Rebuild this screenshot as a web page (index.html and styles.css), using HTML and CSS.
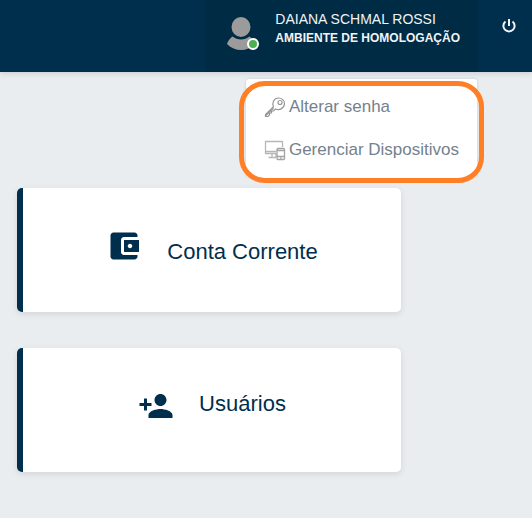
FILE: index.html
```html
<!DOCTYPE html>
<html lang="pt-BR">
<head>
<meta charset="utf-8">
<meta name="viewport" content="width=device-width, initial-scale=1">
<title>Início</title>
<link rel="stylesheet" href="styles.css">
</head>
<body>
<header class="topbar">
  <div class="user">
    <div class="avatar">
      <svg width="36" height="36" viewBox="0 0 36 36" aria-hidden="true">
        <ellipse cx="18" cy="11" rx="9.500" ry="10" fill="#9b9b9b"/>
        <path d="M4 28C5 25 7 22 9.500 20.500C14.500 24.500 21.500 24.500 26.500 20.500C29 22 31 25 32 28C24 36 12 36 4 28Z" fill="#9b9b9b"/>
      </svg>
      <span class="status"></span>
    </div>
    <div class="identity">
      <span class="name">DAIANA SCHMAL ROSSI</span>
      <span class="environment">AMBIENTE DE HOMOLOGAÇÃO</span>
    </div>
    <nav class="menu">
      <a class="menu-item" href="#">
        <svg width="22" height="22" viewBox="0 0 22 22" fill="none" stroke="#969696" stroke-width="1.200" aria-hidden="true">
          <path d="M9.500 11.500C7.500 7 10 2 14.500 2C18 2 20.500 4.500 20.500 7.500C20.500 12 15.500 14.800 11.500 13L9.500 15H7.500V17H5.500V19L4 20.500H1.500V18.500L9.500 10.800"/>
          <path d="M2 19.500L9.500 12.300"/>
          <circle cx="16" cy="6.500" r="2"/>
        </svg>
        Alterar senha
      </a>
      <a class="menu-item" href="#">
        <svg width="22" height="22" viewBox="0 0 22 22" fill="none" stroke="#b4b8ba" stroke-width="1.300" aria-hidden="true">
          <path d="M12 14.500H1.500V2.500H18.500V8M1.500 12.500H12M8 14.500V18M12 14.500V18M4.500 18.500H12"/>
          <rect x="13" y="9.500" width="7.500" height="11" rx="1" fill="#fff" stroke="#a3a3a3"/>
          <path d="M13 11.500H20.500M13 17.500H20.500M16 19.200H17.500" stroke="#a3a3a3"/>
        </svg>
        Gerenciar Dispositivos
      </a>
    </nav>
  </div>
  <button class="logout" type="button" aria-label="Sair">
    <svg width="16" height="16" viewBox="0 0 16 16" fill="none" stroke="#f1f3f5" stroke-width="2" aria-hidden="true">
      <path d="M4.500 3.500A5.600 5.600 0 1 0 11.500 3.500M8 1V8"/>
    </svg>
  </button>
</header>
<main class="cards">
  <a class="card card-account" href="#">
    <svg class="card-icon" viewBox="0 0 24 24" aria-hidden="true"><path d="M21 18v1c0 1.100-.9 2-2 2H5c-1.110 0-2-.9-2-2V5c0-1.100.89-2 2-2h14c1.100 0 2 .9 2 2v1h-9c-1.110 0-2 .9-2 2v8c0 1.100.89 2 2 2h9zm-9-2h10V8H12v8zm4-2.500c-.83 0-1.500-.67-1.500-1.500s.67-1.500 1.500-1.500 1.500.67 1.500 1.500-.67 1.500-1.500 1.500z"/></svg>
    <span class="card-label">Conta Corrente</span>
  </a>
  <a class="card" href="#">
    <svg class="card-icon" viewBox="0 0 24 24" aria-hidden="true"><path d="M15 12c2.210 0 4-1.790 4-4s-1.790-4-4-4-4 1.790-4 4 1.790 4 4 4zm-9-2V7H4v3H1v2h3v3h2v-3h3v-2H6zm9 4c-2.670 0-8 1.340-8 4v2h16v-2c0-2.660-5.330-4-8-4z"/></svg>
    <span class="card-label">Usuários</span>
  </a>
</main>
</body>
</html>
```
FILE: styles.css
```css
* {
  box-sizing: border-box;
}

body {
  margin: 0;
  background: #e9edf0;
  font-family: "Liberation Sans", Arial, sans-serif;
}

.topbar {
  display: flex;
  justify-content: flex-end;
  height: 72px;
  background: #002f4d;
  box-shadow: 0 1px 6px rgba(0, 0, 0, 0.15);
}

.user {
  position: relative;
  display: flex;
  gap: 16px;
  padding: 10px 18px 0;
  background: #002b44;
  color: #f1f3f5;
}

.avatar {
  position: relative;
  width: 36px;
  height: 44px;
  padding-top: 6px;
}

.status {
  position: absolute;
  right: 0;
  bottom: 4px;
  width: 12px;
  height: 12px;
  border: 2px solid #fff;
  border-radius: 50%;
  background: #4caf50;
}

.identity {
  display: flex;
  flex-direction: column;
  white-space: nowrap;
}

.name {
  font-size: 14px;
  line-height: 18px;
}

.environment {
  font-size: 12px;
  line-height: 20px;
  font-weight: bold;
}

.menu {
  position: absolute;
  top: 79px;
  right: 1px;
  padding: 6px 18px;
  border-radius: 3px;
  background: #fff;
  box-shadow: 0 0 3px rgba(0, 0, 0, 0.15);
  white-space: nowrap;
}

.menu::after {
  content: "";
  position: absolute;
  inset: 2px -7px -6px;
  border: 5px solid #ff7f27;
  border-radius: 26px;
  background: linear-gradient(#fff, #fff) bottom / 100% 12px no-repeat;
  pointer-events: none;
}

.menu-item {
  display: flex;
  align-items: center;
  gap: 3px;
  height: 43px;
  color: #75818d;
  font-size: 17px;
  text-decoration: none;
}

.logout {
  width: 54px;
  height: 52px;
  padding: 0 0 0 8px;
  border: 0;
  background: transparent;
  cursor: pointer;
}

.logout svg {
  display: block;
  margin: 0 auto;
}

.cards {
  display: grid;
  gap: 36px;
  max-width: 532px;
  padding: 116px 131px 44px 17px;
}

.card {
  display: flex;
  justify-content: center;
  gap: 25px;
  padding: 40px 0 43px;
  border-left: 6px solid #002f4d;
  border-radius: 5px;
  background: #fff;
  box-shadow: 0 2px 6px rgba(0, 0, 0, 0.1);
  color: #002f4d;
  text-decoration: none;
}

.card-icon {
  width: 36px;
  height: 36px;
  fill: #002f4d;
}

.card-label {
  min-height: 41px;
  font-size: 22px;
  line-height: 32px;
}

.card-account .card-label {
  padding-top: 8px;
}
```
